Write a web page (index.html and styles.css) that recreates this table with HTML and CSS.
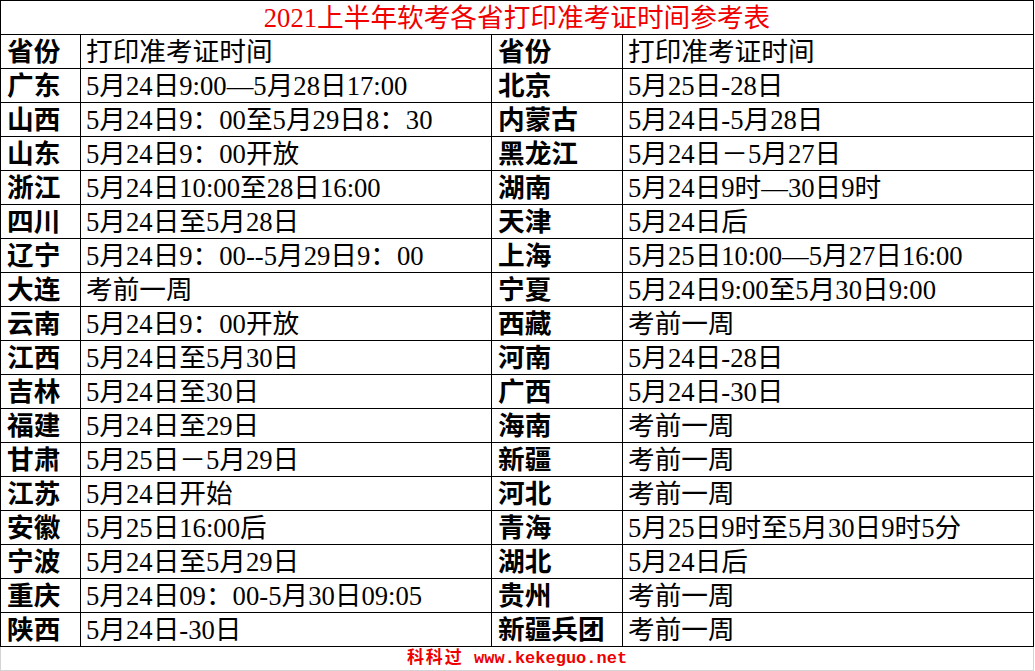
FILE: index.html
```html
<!DOCTYPE html>
<html lang="zh-CN">
<head>
<meta charset="utf-8">
<title>2021上半年软考各省打印准考证时间参考表</title>
<link rel="stylesheet" href="styles.css">
</head>
<body>
<div class="sheet">
  <div class="grid">
    <div class="cell title">2021上半年软考各省打印准考证时间参考表</div>

    <div class="cell prov">省份</div><div class="cell">打印准考证时间</div><div class="cell prov">省份</div><div class="cell">打印准考证时间</div>
    <div class="cell prov">广东</div><div class="cell">5月24日9:00—5月28日17:00</div><div class="cell prov">北京</div><div class="cell">5月25日-28日</div>
    <div class="cell prov">山西</div><div class="cell">5月24日9：00至5月29日8：30</div><div class="cell prov">内蒙古</div><div class="cell">5月24日-5月28日</div>
    <div class="cell prov">山东</div><div class="cell">5月24日9：00开放</div><div class="cell prov">黑龙江</div><div class="cell">5月24日－5月27日</div>
    <div class="cell prov">浙江</div><div class="cell">5月24日10:00至28日16:00</div><div class="cell prov">湖南</div><div class="cell">5月24日9时—30日9时</div>
    <div class="cell prov">四川</div><div class="cell">5月24日至5月28日</div><div class="cell prov">天津</div><div class="cell">5月24日后</div>
    <div class="cell prov">辽宁</div><div class="cell">5月24日9：00--5月29日9：00</div><div class="cell prov">上海</div><div class="cell">5月25日10:00—5月27日16:00</div>
    <div class="cell prov">大连</div><div class="cell">考前一周</div><div class="cell prov">宁夏</div><div class="cell">5月24日9:00至5月30日9:00</div>
    <div class="cell prov">云南</div><div class="cell">5月24日9：00开放</div><div class="cell prov">西藏</div><div class="cell">考前一周</div>
    <div class="cell prov">江西</div><div class="cell">5月24日至5月30日</div><div class="cell prov">河南</div><div class="cell">5月24日-28日</div>
    <div class="cell prov">吉林</div><div class="cell">5月24日至30日</div><div class="cell prov">广西</div><div class="cell">5月24日-30日</div>
    <div class="cell prov">福建</div><div class="cell">5月24日至29日</div><div class="cell prov">海南</div><div class="cell">考前一周</div>
    <div class="cell prov">甘肃</div><div class="cell">5月25日－5月29日</div><div class="cell prov">新疆</div><div class="cell">考前一周</div>
    <div class="cell prov">江苏</div><div class="cell">5月24日开始</div><div class="cell prov">河北</div><div class="cell">考前一周</div>
    <div class="cell prov">安徽</div><div class="cell">5月25日16:00后</div><div class="cell prov">青海</div><div class="cell">5月25日9时至5月30日9时5分</div>
    <div class="cell prov">宁波</div><div class="cell">5月24日至5月29日</div><div class="cell prov">湖北</div><div class="cell">5月24日后</div>
    <div class="cell prov">重庆</div><div class="cell">5月24日09：00-5月30日09:05</div><div class="cell prov">贵州</div><div class="cell">考前一周</div>
    <div class="cell prov">陕西</div><div class="cell">5月24日-30日</div><div class="cell prov">新疆兵团</div><div class="cell">考前一周</div>
  </div>
  <div class="footer"><span class="brand">科科过</span> www.kekeguo.net</div>
</div>
</body>
</html>
```

FILE: styles.css
```css
html, body {
  margin: 0;
  padding: 0;
  background: #ffffff;
}

.sheet {
  width: 1034px;
  font-family: "Liberation Serif", "Noto Sans CJK SC", serif;
  font-size: 26.67px;
  color: #000;
}

.grid {
  display: grid;
  grid-template-columns: 80px 411px 131px 411px;
  grid-auto-rows: 34px;
  border-left: 1px solid #000;
  border-top: 1px solid #000;
}

.cell {
  box-sizing: border-box;
  height: 34px;
  border-right: 1px solid #000;
  border-bottom: 1px solid #000;
  padding: 0 0 1px 5px;
  display: flex;
  align-items: flex-end;
  line-height: 30px;
  white-space: nowrap;
  overflow: hidden;
}

.prov {
  font-weight: 700;
  padding-left: 6px;
}

.title {
  grid-column: 1 / -1;
  justify-content: center;
  padding-left: 0;
  color: #f00000;
}

.footer {
  box-sizing: border-box;
  height: 24px;
  border-left: 1px solid #d4d4d4;
  border-right: 1px solid #d4d4d4;
  border-bottom: 1px solid #d4d4d4;
  text-align: center;
  font-family: "Liberation Mono", "Noto Sans CJK SC", monospace;
  font-size: 17px;
  font-weight: 700;
  line-height: 23px;
  color: #ee0000;
}

.brand {
  letter-spacing: 2px;
}
```
